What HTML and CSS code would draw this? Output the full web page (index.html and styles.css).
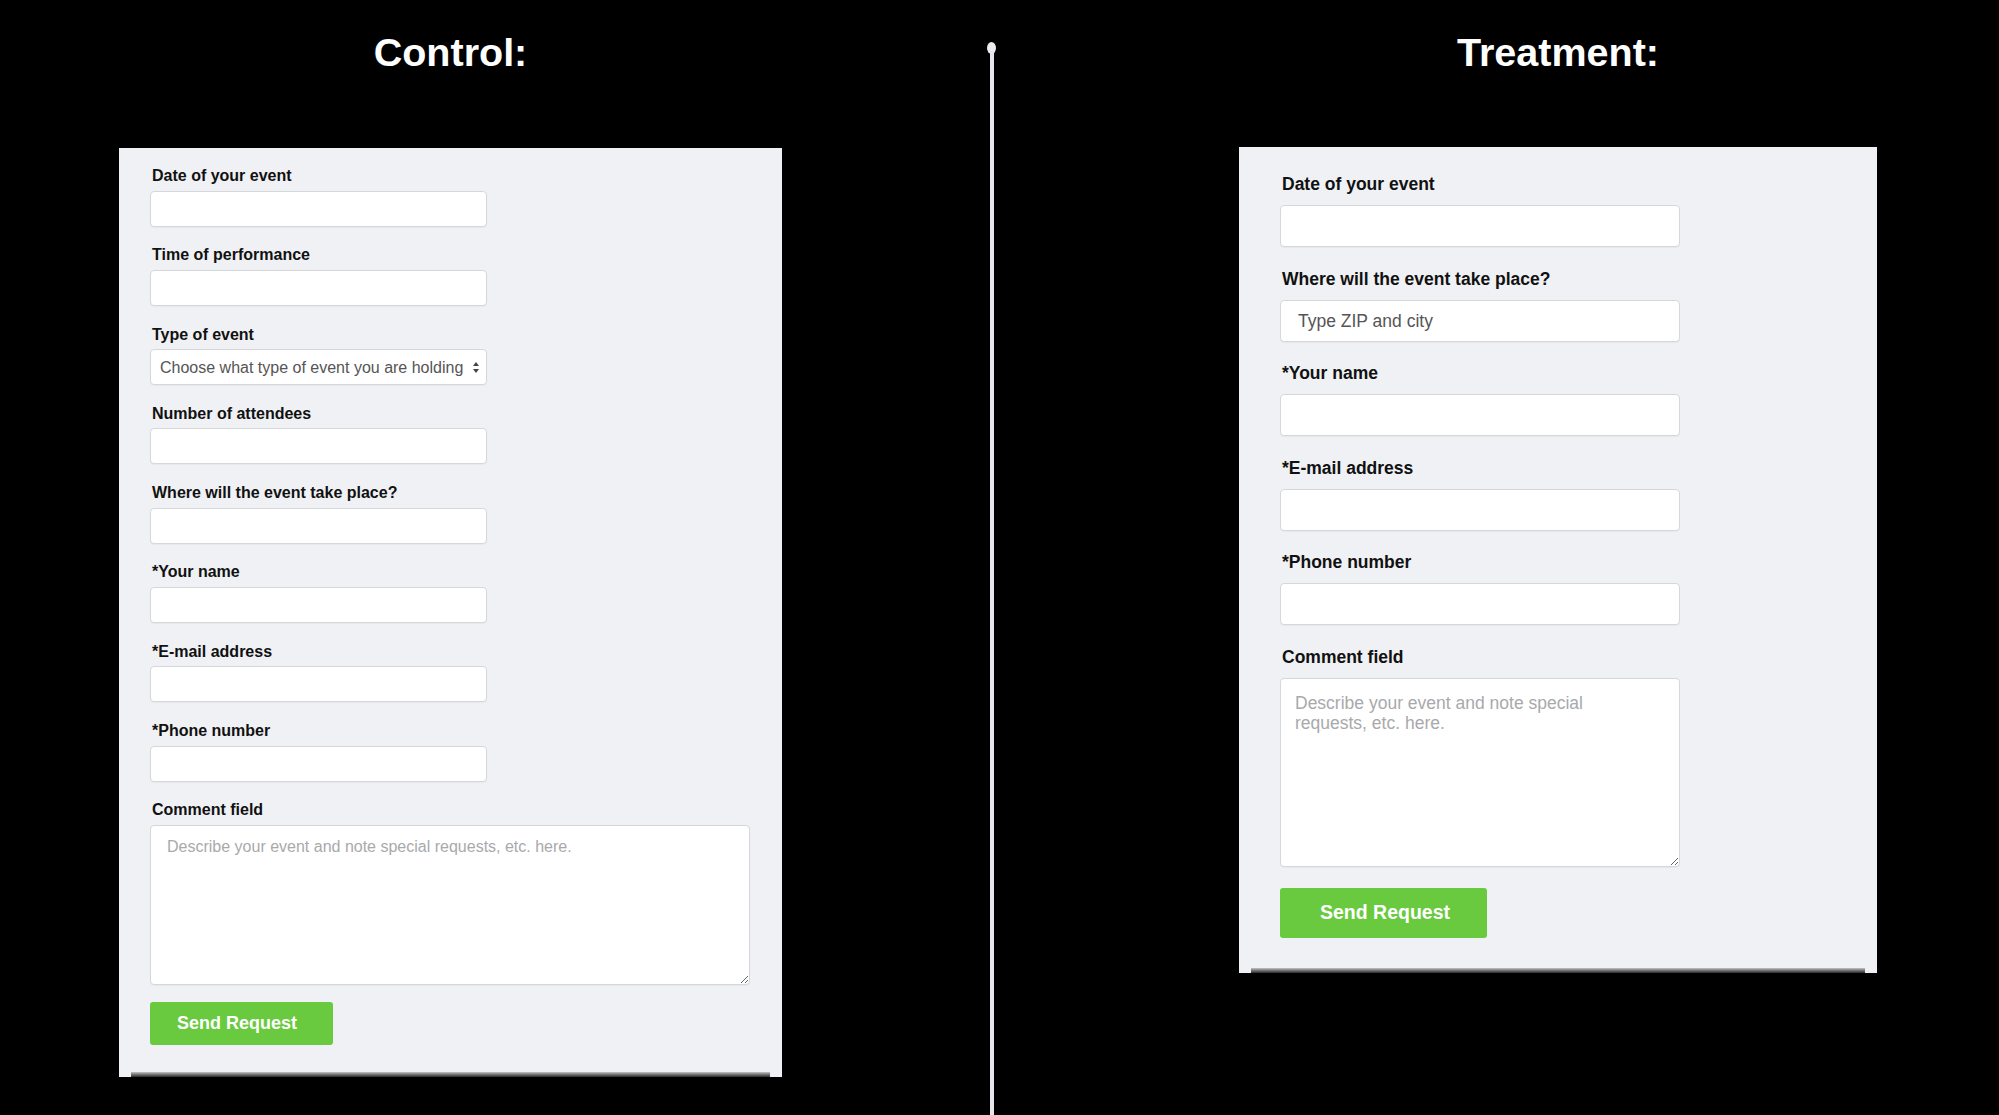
FILE: index.html
```html
<!DOCTYPE html>
<html lang="en">
<head>
    <meta charset="UTF-8">
    <meta name="viewport" content="width=device-width, initial-scale=1.0">
    <title>Event Request Form: Control vs Treatment</title>
    <link rel="stylesheet" href="styles.css">
</head>
<body>
    <div class="stage">
        <section class="side side-control">
            <h1 class="side-title">Control:</h1>
            <form class="panel panel-control">
                <div class="field">
                    <label for="c-date">Date of your event</label>
                    <input type="text" id="c-date">
                </div>
                <div class="field">
                    <label for="c-time">Time of performance</label>
                    <input type="text" id="c-time">
                </div>
                <div class="field">
                    <label for="c-type">Type of event</label>
                    <div class="select-wrap">
                        <select id="c-type">
                            <option>Choose what type of event you are holding</option>
                        </select>
                        <span class="select-arrows"></span>
                    </div>
                </div>
                <div class="field">
                    <label for="c-count">Number of attendees</label>
                    <input type="text" id="c-count">
                </div>
                <div class="field">
                    <label for="c-place">Where will the event take place?</label>
                    <input type="text" id="c-place">
                </div>
                <div class="field">
                    <label for="c-name">*Your name</label>
                    <input type="text" id="c-name">
                </div>
                <div class="field">
                    <label for="c-email">*E-mail address</label>
                    <input type="text" id="c-email">
                </div>
                <div class="field">
                    <label for="c-phone">*Phone number</label>
                    <input type="text" id="c-phone">
                </div>
                <div class="field field-comment">
                    <label for="c-comment">Comment field</label>
                    <textarea id="c-comment" placeholder="Describe your event and note special requests, etc. here."></textarea>
                </div>
                <button type="button" class="send-btn">Send Request</button>
            </form>
        </section>

        <div class="divider"></div>

        <section class="side side-treatment">
            <h1 class="side-title">Treatment:</h1>
            <form class="panel panel-treatment">
                <div class="field">
                    <label for="t-date">Date of your event</label>
                    <input type="text" id="t-date">
                </div>
                <div class="field">
                    <label for="t-place">Where will the event take place?</label>
                    <input type="text" id="t-place" placeholder="Type ZIP and city">
                </div>
                <div class="field">
                    <label for="t-name">*Your name</label>
                    <input type="text" id="t-name">
                </div>
                <div class="field">
                    <label for="t-email">*E-mail address</label>
                    <input type="text" id="t-email">
                </div>
                <div class="field">
                    <label for="t-phone">*Phone number</label>
                    <input type="text" id="t-phone">
                </div>
                <div class="field field-comment">
                    <label for="t-comment">Comment field</label>
                    <textarea id="t-comment" placeholder="Describe your event and note special requests, etc. here."></textarea>
                </div>
                <button type="button" class="send-btn">Send Request</button>
            </form>
        </section>
    </div>
</body>
</html>
```

FILE: styles.css
```css
html, body {
    margin: 0;
    height: 100%;
}
body {
    background: #000;
    font-family: "Liberation Sans", Arial, sans-serif;
    overflow: hidden;
}
.stage {
    display: flex;
    height: 1115px;
}

/* columns */
.side-control {
    width: 987px;
    padding-left: 119px;
    box-sizing: border-box;
}
.side-treatment {
    flex: 1;
    padding-left: 243px;
}
.side-title {
    margin: 27px 0 71px;
    height: 50px;
    line-height: 50px;
    font-size: 39.5px;
    font-weight: bold;
    color: #fff;
    text-align: center;
}
.side-control .side-title {
    width: 663px;
}
.side-treatment .side-title {
    width: 638px;
    margin-bottom: 70px;
}

/* divider */
.divider {
    width: 9px;
    margin-top: 42px;
    display: flex;
    flex-direction: column;
    align-items: center;
}
.divider::before {
    content: "";
    width: 9px;
    height: 12px;
    border-radius: 50%;
    background: #ececf2;
}
.divider::after {
    content: "";
    flex: 1;
    width: 4px;
    margin-top: -3px;
    background: #e6e6ec;
}

/* form panels */
.panel {
    position: relative;
    background: #f0f1f5;
    box-sizing: border-box;
    display: flex;
    flex-direction: column;
    align-items: flex-start;
}
.panel::after {
    content: "";
    position: absolute;
    left: 12px;
    right: 12px;
    bottom: 0;
    height: 5px;
    background: linear-gradient(#c4c4c8, #8a8a8c 35%, #555 70%, #2c2c2c);
}
.field label {
    display: block;
    font-weight: bold;
    color: #111;
    padding-left: 2px;
}
.field input,
.field select,
.field textarea {
    display: block;
    box-sizing: border-box;
    margin: 0;
    border: 1px solid #d6d7da;
    border-radius: 4px;
    background: #fff;
    box-shadow: 0 1px 1px rgba(0, 0, 0, 0.04);
    font-family: "Liberation Sans", Arial, sans-serif;
    color: #333;
    outline: none;
}
.field textarea {
    resize: vertical;
}
.field textarea::placeholder {
    color: #a9a9ab;
}
.send-btn {
    border: none;
    border-radius: 3px;
    background: #69ca3f;
    color: #fff;
    font-family: "Liberation Sans", Arial, sans-serif;
    font-weight: bold;
    text-align: left;
    cursor: pointer;
}

/* control sizing */
.panel-control {
    width: 663px;
    height: 929px;
    padding: 19px 31px 0;
}
.panel-control .field {
    margin-bottom: 19.8px;
}
.panel-control .field label {
    font-size: 16px;
    line-height: 18px;
    margin-bottom: 5.5px;
}
.panel-control .field input,
.panel-control .field select {
    width: 337px;
    height: 36px;
    font-size: 16px;
    padding: 0 9px;
}
.panel-control .field textarea {
    width: 600px;
    height: 160px;
    font-size: 16px;
    line-height: 18px;
    padding: 12px 16px;
}
.panel-control .field-comment {
    margin-bottom: 17px;
}
.panel-control .send-btn {
    width: 183px;
    height: 43px;
    font-size: 18px;
    padding: 0 0 0 27px;
}

/* select with mac-style arrows */
.select-wrap {
    position: relative;
}
.select-wrap select {
    appearance: none;
    -webkit-appearance: none;
    color: #555;
}
.select-arrows {
    position: absolute;
    right: 7px;
    top: 13px;
    width: 7px;
    height: 11px;
}
.select-arrows::before,
.select-arrows::after {
    content: "";
    position: absolute;
    left: 0;
    border-left: 3.5px solid transparent;
    border-right: 3.5px solid transparent;
}
.select-arrows::before {
    top: 0;
    border-bottom: 4px solid #444;
}
.select-arrows::after {
    bottom: 0;
    border-top: 4px solid #444;
}

/* treatment sizing */
.panel-treatment {
    width: 638px;
    height: 826px;
    padding: 27px 41px 0;
}
.panel-treatment .field {
    margin-bottom: 21.5px;
}
.panel-treatment .field label {
    font-size: 17.5px;
    line-height: 20px;
    margin-bottom: 11px;
}
.panel-treatment .field input {
    width: 400px;
    height: 42px;
    font-size: 17.5px;
    padding: 2px 17px 0;
}
.panel-treatment .field input::placeholder {
    color: #555;
}
.panel-treatment .field textarea {
    width: 400px;
    height: 189px;
    font-size: 17.5px;
    line-height: 20px;
    padding: 14.5px 40px 14px 14px;
}
.panel-treatment .field-comment {
    margin-bottom: 21px;
}
.panel-treatment .send-btn {
    width: 207px;
    height: 50px;
    font-size: 19.5px;
    padding: 0 0 0 40px;
}
```
